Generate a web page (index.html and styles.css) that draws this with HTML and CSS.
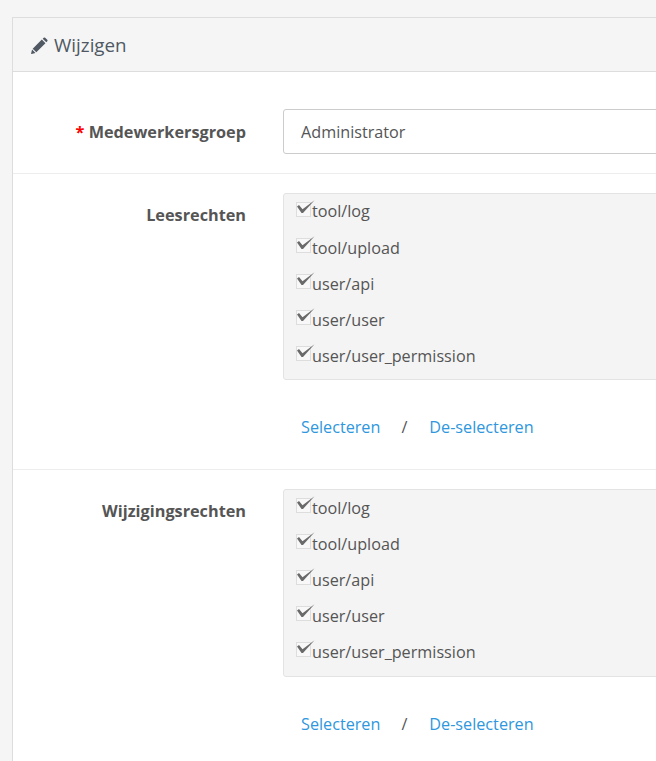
FILE: index.html
```html
<!DOCTYPE html>
<html lang="nl">
  <head>
    <meta charset="UTF-8" />
    <title>Wijzigen</title>
    <link rel="stylesheet" href="styles.css">
  </head>
  <body>
    <div class="panel">
      <div class="panel-heading">
        <svg class="pencil" viewBox="0 0 16 16" width="17" height="17">
          <path d="M11 1.6l.9-.9a1 1 0 0 1 1.4 0l2 2a1 1 0 0 1 0 1.4l-.9.9zM10.2 2.4l3.4 3.4L5 14.4 1.6 11zM1 11.8L4.2 15l-3.7.9a.3.3 0 0 1-.4-.4z" fill="#4f5863"/>
        </svg>
        <span>Wijzigen</span>
      </div>
      <div class="panel-body">
        <!-- groep -->
        <div class="form-row first">
          <label class="form-label required">Medewerkersgroep</label>
          <div class="form-field">
            <input class="form-input" type="text" value="Administrator" />
          </div>
        </div>

        <!-- leesrechten -->
        <div class="form-row read-row">
          <label class="form-label">Leesrechten</label>
          <div class="form-field">
            <div class="well">
              <div class="check-row"><span class="checkbox"></span>tool/log</div>
              <div class="check-row"><span class="checkbox"></span>tool/upload</div>
              <div class="check-row"><span class="checkbox"></span>user/api</div>
              <div class="check-row"><span class="checkbox"></span>user/user</div>
              <div class="check-row"><span class="checkbox"></span>user/user_permission</div>
            </div>
            <div class="select-links">
              <a href="#">Selecteren</a><span class="slash">/</span><a href="#">De-selecteren</a>
            </div>
          </div>
        </div>

        <!-- wijzigingsrechten -->
        <div class="form-row write-row">
          <label class="form-label">Wijzigingsrechten</label>
          <div class="form-field">
            <div class="well">
              <div class="check-row"><span class="checkbox"></span>tool/log</div>
              <div class="check-row"><span class="checkbox"></span>tool/upload</div>
              <div class="check-row"><span class="checkbox"></span>user/api</div>
              <div class="check-row"><span class="checkbox"></span>user/user</div>
              <div class="check-row"><span class="checkbox"></span>user/user_permission</div>
            </div>
            <div class="select-links">
              <a href="#">Selecteren</a><span class="slash">/</span><a href="#">De-selecteren</a>
            </div>
          </div>
        </div>
      </div>
    </div>
  </body>
</html>
```

FILE: styles.css
```css
html,
body {
  height: 100%;
  overflow: hidden;
}

body {
  margin: 0;
  padding: 17px 0 0 12px;
  box-sizing: border-box;
  background: #f5f5f5;
  font-family: "Open Sans", sans-serif;
  font-size: 16.2px;
  color: #555;
}

.panel {
  width: 900px;
  background: #fff;
  border: 1px solid #ddd;
}

.panel-heading {
  display: flex;
  align-items: center;
  gap: 6px;
  height: 53px;
  padding-left: 18px;
  background: #f5f5f5;
  border-bottom: 1px solid #ddd;
  font-size: 18.8px;
  color: #4f5863;
}

.pencil {
  margin-top: 1px;
}

.panel-body {
  padding-top: 18px;
}

.form-row {
  display: flex;
  padding: 19px 0;
  border-top: 1px solid #ededed;
}

.form-row.first {
  border-top: none;
}

.form-label {
  width: 233px;
  padding-top: 11px;
  text-align: right;
  font-weight: 700;
  font-size: 16.25px;
  line-height: 22px;
}

.first .form-label {
  padding-top: 12px;
}

.required::before {
  content: "* ";
  color: #f00;
}

.form-field {
  margin-left: 37px;
  flex: 1;
}

.form-input {
  display: block;
  width: 100%;
  height: 45px;
  box-sizing: border-box;
  padding: 0 17px;
  border: 1px solid #ccc;
  border-radius: 3px;
  font: inherit;
  color: #555;
}

.well {
  padding: 0 12px 5px;
  background: #f4f4f4;
  border: 1px solid #e3e3e3;
  border-radius: 3px;
}

.write-row .well {
  padding-bottom: 6px;
}

.check-row {
  display: flex;
  height: 36px;
  line-height: 36px;
}

.read-row .check-row:first-child {
  line-height: 34px;
}

.checkbox {
  position: relative;
  box-sizing: border-box;
  width: 15px;
  height: 15px;
  margin-top: 8px;
  margin-right: 1px;
  background: #f8f8f8;
  border: 1px solid #ddd;
}

/* the tick sticks out above the box */
.checkbox::after {
  content: "";
  position: absolute;
  left: 0;
  top: -3px;
  width: 18px;
  height: 14px;
  background: #6a6a6a;
  clip-path: polygon(0 6.5px, 2px 5px, 5.5px 9.3px, 17.5px 0.3px, 6px 13px, 4.5px 13px);
}

.select-links {
  padding: 35px 0 11px 18px;
  line-height: 24px;
}

.select-links a {
  color: #2e97de;
  text-decoration: none;
}

.slash {
  margin: 0 22px 0 21px;
}
```
